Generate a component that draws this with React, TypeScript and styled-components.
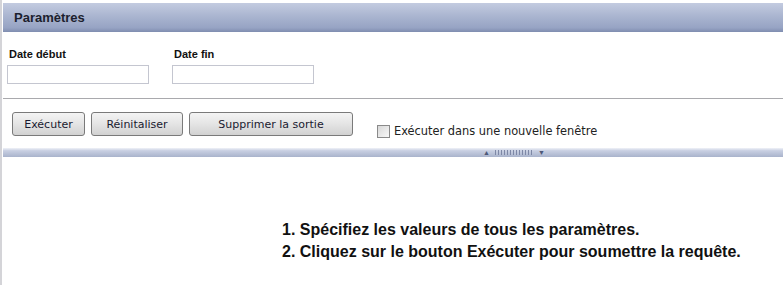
import React from "react";
import styled, { createGlobalStyle } from "styled-components";

const GlobalStyle = createGlobalStyle`
    html, body {
        margin: 0;
        padding: 0;
        background: #ffffff;
        font-family: "Liberation Sans", Arial, sans-serif;
    }
`;

// Outer frame: thin grey rule on the left edge, like the portal frame
const Page = styled.div`
    width: 783px;
    height: 285px;
    box-sizing: border-box;
    border-left: 2px solid #d4d4d8;
    padding: 3px 0 0 1px;
    overflow: hidden;
    display: flex;
    flex-direction: column;
`;

const Header = styled.div`
    height: 29px;
    flex-shrink: 0;
    display: flex;
    align-items: center;
    padding-left: 11px;
    background: linear-gradient(180deg, #c3cbe0 0%, #aab5d0 45%, #97a4c4 85%, #7f8db0 100%);
    font-size: 13px;
    font-weight: bold;
    color: #1c1f2e;
`;

const Fields = styled.div`
    display: flex;
    flex-shrink: 0;
    gap: 23px;
    padding: 16px 0 0 4px;
    height: 50px;
`;

const Field = styled.div`
    display: flex;
    flex-direction: column;
`;

const Label = styled.label`
    font-size: 11px;
    font-weight: bold;
    color: #111;
    padding-left: 2px;
    margin-bottom: 5px;
`;

const Input = styled.input`
    width: 142px;
    height: 19px;
    box-sizing: border-box;
    border: 1px solid #c4c6d0;
    background: #fff;
    margin: 0;
`;

const Divider = styled.hr`
    margin: 0;
    flex-shrink: 0;
    border: none;
    border-top: 1px solid #a9a9ad;
    height: 0;
`;

const Toolbar = styled.div`
    display: flex;
    flex-shrink: 0;
    align-items: flex-start;
    gap: 6px;
    padding: 13px 0 0 9px;
    height: 37px;
    box-sizing: border-box;
`;

const Button = styled.button<{ $width: number }>`
    width: ${({ $width }) => $width}px;
    height: 24px;
    padding: 0;
    border: 1px solid #7a7a7a;
    border-radius: 3px;
    background: linear-gradient(180deg, #f4f4f4 0%, #e4e4e4 50%, #d2d2d2 100%);
    font-family: "DejaVu Sans", Verdana, sans-serif;
    font-size: 11px;
    color: #1a1a30;
    cursor: pointer;
`;

const CheckRow = styled.label`
    display: flex;
    align-items: center;
    gap: 4px;
    margin: 12px 0 0 18px;
    font-family: "DejaVu Sans", Verdana, sans-serif;
    font-size: 11.4px;
    color: #222;
`;

const Box = styled.span`
    width: 11px;
    height: 11px;
    border: 1px solid #8a8a8a;
    background: linear-gradient(135deg, #d8d8d8, #f8f8f8);
`;

const Splitter = styled.div`
    margin-top: 12px;
    height: 9px;
    flex-shrink: 0;
    display: flex;
    align-items: center;
    padding-left: 480px;
    background: linear-gradient(180deg, #f0f2f8 0%, #c8cfe2 30%, #a9b3cc 100%);
`;

const Grip = styled.span`
    display: flex;
    align-items: center;
    gap: 4px;
    font-size: 7px;
    color: #4e5878;
`;

const Dots = styled.span`
    width: 40px;
    height: 5px;
    background-image: radial-gradient(circle, #7e88a6 0.8px, transparent 1px);
    background-size: 3px 2px;
`;

const Help = styled.ol`
    margin: 62px 0 0;
    padding: 0 0 0 279px;
    list-style: none;
    font-size: 16px;
    font-weight: bold;
    line-height: 22px;
    color: #111;
`;

const steps = [
    "1. Spécifiez les valeurs de tous les paramètres.",
    "2. Cliquez sur le bouton Exécuter pour soumettre la requête.",
];

export default function App() {
    return (
        <>
            <GlobalStyle />
            <Page>
                <Header>Paramètres</Header>
                <Fields>
                    <Field>
                        <Label>Date début</Label>
                        <Input type="text" />
                    </Field>
                    <Field>
                        <Label>Date fin</Label>
                        <Input type="text" />
                    </Field>
                </Fields>
                <Divider />
                <Toolbar>
                    <Button $width={73}>Exécuter</Button>
                    <Button $width={92}>Réinitaliser</Button>
                    <Button $width={164}>Supprimer la sortie</Button>
                    <CheckRow>
                        <Box />
                        Exécuter dans une nouvelle fenêtre
                    </CheckRow>
                </Toolbar>
                <Splitter>
                    <Grip>
                        ▲<Dots />▼
                    </Grip>
                </Splitter>
                <Help>
                    {steps.map((s) => (
                        <li key={s}>{s}</li>
                    ))}
                </Help>
            </Page>
        </>
    );
}
